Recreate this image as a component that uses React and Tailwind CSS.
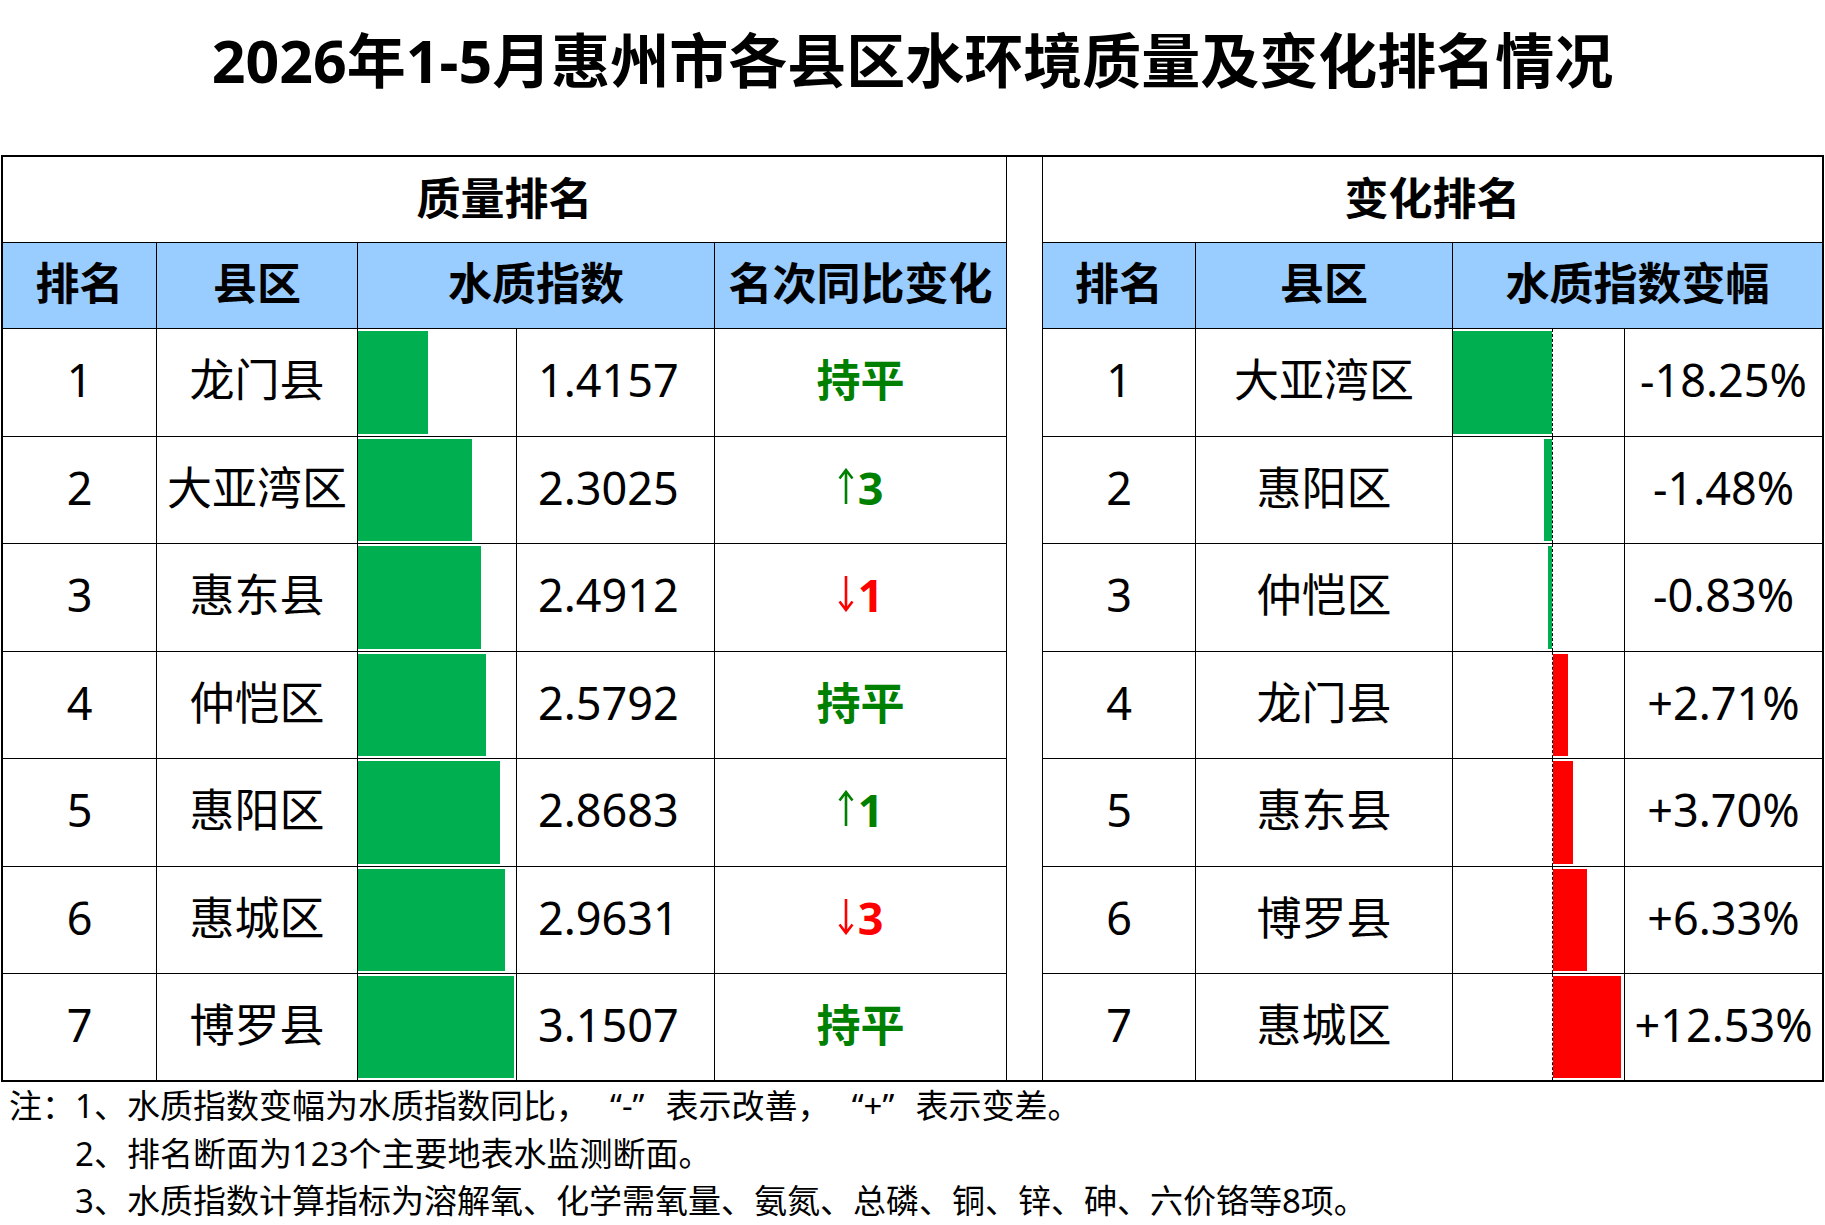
import React from 'react';

const quality = [
  { rank: 1, name: '龙门县', value: 1.4157, change: 'flat' },
  { rank: 2, name: '大亚湾区', value: 2.3025, change: 'up', n: 3 },
  { rank: 3, name: '惠东县', value: 2.4912, change: 'down', n: 1 },
  { rank: 4, name: '仲恺区', value: 2.5792, change: 'flat' },
  { rank: 5, name: '惠阳区', value: 2.8683, change: 'up', n: 1 },
  { rank: 6, name: '惠城区', value: 2.9631, change: 'down', n: 3 },
  { rank: 7, name: '博罗县', value: 3.1507, change: 'flat' },
];

const changes = [
  { rank: 1, name: '大亚湾区', pct: -18.25 },
  { rank: 2, name: '惠阳区', pct: -1.48 },
  { rank: 3, name: '仲恺区', pct: -0.83 },
  { rank: 4, name: '龙门县', pct: 2.71 },
  { rank: 5, name: '惠东县', pct: 3.7 },
  { rank: 6, name: '博罗县', pct: 6.33 },
  { rank: 7, name: '惠城区', pct: 12.53 },
];

// row heights include the 1px bottom line, last row has none
const rowH = ['h-[108px]', 'h-[107px]', 'h-[108px]', 'h-[107px]', 'h-[108px]', 'h-[107px]', 'h-[106px]'];

const MAX_VALUE = 3.1507;
const BAR_MAX = 156;
const PCT_SCALE = 5.42;

const Arrow = ({ up }) => (
  <svg width="16" height="37" viewBox="0 0 16 37" className="inline-block align-baseline mr-[4px]">
    {up ? (
      <path d="M8 36V2M1.5 10.5L8 2l6.5 8.5" stroke="currentColor" strokeWidth="2.6" fill="none" />
    ) : (
      <path d="M8 1v34M1.5 26.5L8 35l6.5-8.5" stroke="currentColor" strokeWidth="2.6" fill="none" />
    )}
  </svg>
);

const ChangeCell = ({ row }) => {
  if (row.change === 'flat') {
    return <span className="font-bold text-[44px] text-[#008000]">持平</span>;
  }
  const up = row.change === 'up';
  return (
    <span className={up ? 'text-[#008000] font-bold' : 'text-[#ff0000] font-bold'}>
      <Arrow up={up} />
      {row.n}
    </span>
  );
};

const fmtPct = (v) => (v > 0 ? '+' : '') + v.toFixed(2) + '%';

// full-width quotes, glyph pushed to the inner side
const Quoted = ({ children }) => (
  <>
    <span className="inline-block w-[1em] text-right">“</span>
    {children}
    <span className="inline-block w-[1em] text-left">”</span>
  </>
);

const cell = 'flex items-center justify-center pb-[5px]';

const QualityTable = () => (
  <div className="w-[1004px] border-r border-black flex flex-col">
    <div className="h-[86px] border-b border-black flex items-center justify-center pb-[4px] text-[44px] font-bold">
      质量排名
    </div>
    <div className="h-[86px] border-b border-black flex bg-[#99ccff] text-[44px] font-bold">
      <div className={`w-[154px] border-r border-black ${cell}`}>排名</div>
      <div className={`w-[201px] border-r border-black ${cell}`}>县区</div>
      <div className={`w-[357px] border-r border-black ${cell}`}>水质指数</div>
      <div className={`flex-1 ${cell}`}>名次同比变化</div>
    </div>
    {quality.map((row, i) => (
      <div key={row.rank} className={`${rowH[i]} ${i < 6 ? 'border-b border-black' : ''} flex text-[45px]`}>
        <div className={`w-[154px] border-r border-black ${cell}`}>{row.rank}</div>
        <div className={`w-[201px] border-r border-black ${cell}`}>{row.name}</div>
        <div className="w-[159px] border-r border-black flex py-[2px]">
          <div className="bg-[#00b050] h-full" style={{ width: (row.value / MAX_VALUE) * BAR_MAX }} />
        </div>
        <div className="w-[198px] border-r border-black flex items-center pl-[21px] pb-[5px]">{row.value.toFixed(4)}</div>
        <div className={`flex-1 ${cell}`}>
          <ChangeCell row={row} />
        </div>
      </div>
    ))}
  </div>
);

const ChangeTable = () => (
  <div className="w-[780px] border-l border-black flex flex-col">
    <div className="h-[86px] border-b border-black flex items-center justify-center pb-[4px] text-[44px] font-bold">
      变化排名
    </div>
    <div className="h-[86px] border-b border-black flex bg-[#99ccff] text-[44px] font-bold">
      <div className={`w-[153px] border-r border-black ${cell}`}>排名</div>
      <div className={`w-[257px] border-r border-black ${cell}`}>县区</div>
      <div className={`flex-1 ${cell}`}>水质指数变幅</div>
    </div>
    {changes.map((row, i) => (
      <div key={row.rank} className={`${rowH[i]} ${i < 6 ? 'border-b border-black' : ''} flex text-[45px]`}>
        <div className={`w-[153px] border-r border-black ${cell}`}>{row.rank}</div>
        <div className={`w-[257px] border-r border-black ${cell}`}>{row.name}</div>
        <div className="w-[172px] border-r border-black flex">
          <div className="w-[99px] flex justify-end py-[2px]">
            {row.pct < 0 && (
              <div className="bg-[#00b050] h-full" style={{ width: Math.abs(row.pct) * PCT_SCALE }} />
            )}
          </div>
          <div className="w-0 border-l border-dashed border-black" />
          <div className="flex-1 flex py-[2px]">
            {row.pct > 0 && <div className="bg-[#ff0000] h-full" style={{ width: row.pct * PCT_SCALE }} />}
          </div>
        </div>
        <div className={`flex-1 ${cell}`}>{fmtPct(row.pct)}</div>
      </div>
    ))}
  </div>
);

export default function App() {
  return (
    <div className="w-[1825px] h-[1225px] bg-white text-black font-['Noto_Sans','Noto_Sans_CJK_SC',sans-serif] overflow-hidden">
      <div className="h-[155px] pt-[31px]">
        <h1 className="text-center text-[59px] leading-[59px] font-bold">
          2026年1-5月惠州市各县区水环境质量及变化排名情况
        </h1>
      </div>
      <div className="ml-[1px] w-[1823px] border-2 border-black flex">
        <QualityTable />
        <div className="w-[35px]" />
        <ChangeTable />
      </div>
      <div className="text-[33px] leading-[47.5px]">
        <p className="pl-[9px]">
          注：1、水质指数变幅为水质指数同比，<Quoted>-</Quoted>表示改善，<Quoted>+</Quoted>表示变差。
        </p>
        <p className="pl-[75px]">2、排名断面为123个主要地表水监测断面。</p>
        <p className="pl-[75px]">3、水质指数计算指标为溶解氧、化学需氧量、氨氮、总磷、铜、锌、砷、六价铬等8项。</p>
      </div>
    </div>
  );
}
